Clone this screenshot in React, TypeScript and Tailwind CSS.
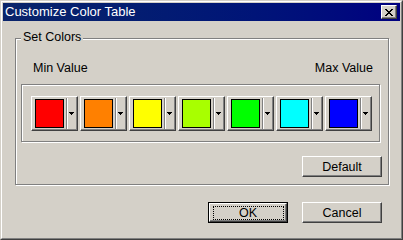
const swatches = [
  "bg-[#ff0000]",
  "bg-[#ff8000]",
  "bg-[#ffff00]",
  "bg-[#a8ff00]",
  "bg-[#00ff00]",
  "bg-[#00ffff]",
  "bg-[#0000ff]",
];

// classic raised 3d look
const raised =
  "border border-t-white border-l-white border-r-[#404040] border-b-[#404040] shadow-[inset_-1px_-1px_0_#808080] bg-[#d4d0c8]";
// etched group frame
const etched = "border border-[#808080] shadow-[inset_1px_1px_0_#fff,1px_1px_0_#fff]";

function ColorButton({ swatch }: { swatch: string }) {
  return (
    <button type="button" className={`flex h-[35px] w-[47px] items-center ${raised}`}>
      <span className={`ml-[3px] h-[29px] w-[29px] border border-black ${swatch}`} />
      <span className="ml-[2px] h-[31px] w-[2px] border-l border-r border-l-[#808080] border-r-white" />
      <svg className="ml-[1px]" width="5" height="3" viewBox="0 0 5 3" shapeRendering="crispEdges">
        <path d="M0 0h5v1H0zM1 1h3v1H1zM2 2h1v1H2z" fill="#000" />
      </svg>
    </button>
  );
}

function PushButton({ label }: { label: string }) {
  return (
    <button type="button" className={`flex h-[21px] w-[80px] items-center justify-center leading-[14px] ${raised}`}>
      {label}
    </button>
  );
}

export default function App() {
  return (
    <div className="h-[240px] w-[403px] border border-t-[#d4d0c8] border-l-[#d4d0c8] border-r-[#404040] border-b-[#404040] bg-[#d4d0c8] font-['Liberation_Sans',Arial,sans-serif] text-[12.5px] text-black">
      <div className="flex h-full flex-col border border-t-white border-l-white border-r-[#808080] border-b-[#808080] p-px">
        {/* title bar */}
        <div className="flex h-[18px] items-center justify-between bg-linear-to-r from-[#0a246a] to-[#000080] pl-[2px] pr-[3px]">
          <span className="text-[13px] leading-[18px] text-white">Customize Color Table</span>
          <button type="button" className={`flex h-[14px] w-[16px] items-center justify-center ${raised}`}>
            <svg width="8" height="7" viewBox="0 0 8 7" shapeRendering="crispEdges">
              <path
                d="M0 0h2v1H0zM6 0h2v1H6zM1 1h2v1H1zM5 1h2v1H5zM2 2h4v1H2zM3 3h2v1H3zM2 4h4v1H2zM1 5h2v1H1zM5 5h2v1H5zM0 6h2v1H0zM6 6h2v1H6z"
                fill="#000"
              />
            </svg>
          </button>
        </div>

        {/* Set Colors group */}
        <div className={`relative ml-[12px] mt-[17px] flex h-[147px] w-[374px] flex-col ${etched}`}>
          <span className="absolute -top-[9px] left-[5px] bg-[#d4d0c8] px-[2px] leading-[14px]">Set Colors</span>
          <div className="mt-[22px] flex justify-between pl-[17px] pr-[15px] leading-[14px]">
            <span>Min Value</span>
            <span>Max Value</span>
          </div>
          <div className={`ml-[5px] mt-[9px] flex h-[58px] w-[359px] items-start gap-[2px] pl-[9px] pt-[11px] ${etched}`}>
            {swatches.map((s) => (
              <ColorButton key={s} swatch={s} />
            ))}
          </div>
          <div className="mt-[14px] flex justify-end pr-[6px]">
            <PushButton label="Default" />
          </div>
        </div>

        {/* dialog buttons */}
        <div className="mt-[17px] flex justify-end gap-[14px] pr-[18px]">
          <div className="h-[21px] w-[80px] border border-black">
            <button
              type="button"
              className="flex h-full w-full items-center justify-center border border-t-white border-l-white border-r-[#404040] border-b-[#404040] bg-[#d4d0c8] shadow-[inset_-1px_-1px_0_#808080]"
            >
              <span className="flex h-[14px] w-[71px] items-center justify-center border border-dotted border-black leading-[12px]">
                OK
              </span>
            </button>
          </div>
          <PushButton label="Cancel" />
        </div>
      </div>
    </div>
  );
}
